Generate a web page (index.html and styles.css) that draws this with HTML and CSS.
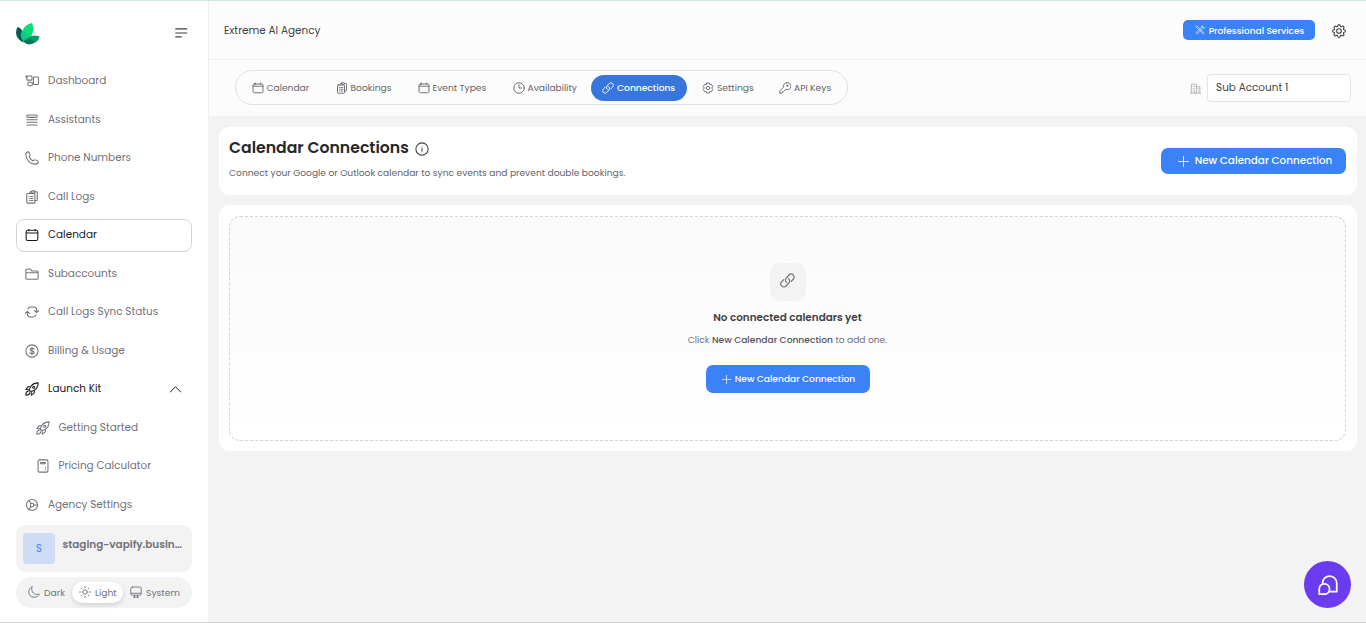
FILE: index.html
```html
<!DOCTYPE html>
<html lang="en">
<head>
<meta charset="utf-8">
<title>Calendar Connections</title>
<link rel="stylesheet" href="styles.css">
</head>
<body>
<svg class="sprite" aria-hidden="true">
  <symbol id="dashboard" viewBox="0 0 24 24"><rect x="3" y="3.500" width="9" height="7" rx="1.500"/><path d="M.8 4h2.200v3M5.500 14H11a1.500 1.500 0 0 1 1.500 1.500v3A1.500 1.500 0 0 1 11 20H6.500A1.500 1.500 0 0 1 5 18.500v-3z"/><rect x="14.500" y="5" width="8.500" height="13" rx="1.500"/></symbol>
  <symbol id="lines" viewBox="0 0 24 24"><rect x="3" y="3.500" width="18" height="4" rx="2"/><path d="M3 11.500h18M3 16h18M3 20.500h18"/></symbol>
  <symbol id="phone" viewBox="0 0 24 24"><path d="M1.500 6.500C1.500 3.500 3.500 1.500 5 1.500c1 0 1.700.5 2.200 1.500l1.500 3.200c.4 1 .1 1.700-.6 2.500L7 10c1.300 3 3.800 5.500 7 7l1.300-1.300c.7-.7 1.500-.9 2.400-.5l3.300 1.300c1 .5 1.500 1 1.500 2 0 2-2 4-5 4C9 22.500 1.500 15 1.500 6.500z"/></symbol>
  <symbol id="logs" viewBox="0 0 24 24"><path d="M8 6V4.500A1.500 1.500 0 0 1 9.500 3H11M17 3h2.500A1.500 1.500 0 0 1 21 4.500v12a1.500 1.500 0 0 1-1.500 1.500H17"/><rect x="11" y="1.500" width="6" height="3.500" rx="1.500"/><rect x="3" y="6" width="14" height="16.500" rx="1.500"/><path d="M7 11h.5M7 14.500h.5M7 18h.5M10 11h3.500M10 14.500h3.500M10 18h3.500"/></symbol>
  <symbol id="cal" viewBox="0 0 24 24"><rect x="2" y="4" width="20" height="17.500" rx="3"/><path d="M2 8.500h20M6.500 2v2.500M17.500 2v2.500"/></symbol>
  <symbol id="folder" viewBox="0 0 24 24"><path d="M1.500 19V5.500a2 2 0 0 1 2-2H9L12 7h8.500a2 2 0 0 1 2 2v10a2 2 0 0 1-2 2h-17a2 2 0 0 1-2-2zM1.500 10h21"/></symbol>
  <symbol id="sync" viewBox="0 0 24 24"><path d="M5 7C6 4.500 7.500 3.500 10 3.500h5c3 0 5 2 5 5V12M16.500 9.500L20 13l3.500-3.500M19 17c-1 2.500-2.500 3.500-5 3.500H9c-3 0-5-2-5-5V12M.5 14.500L4 11l3.500 3.500"/></symbol>
  <symbol id="dollar" viewBox="0 0 24 24"><circle cx="12" cy="12" r="10.500"/><path d="M12 5.500v13M15.500 9c-.5-1.200-1.800-1.700-3.500-1.700-2 0-3.500.8-3.500 2.300 0 3.300 7.200 1.500 7.200 4.900 0 1.500-1.700 2.300-3.700 2.300s-3.300-.8-3.700-2"/></symbol>
  <symbol id="rocket" viewBox="0 0 24 24"><path d="M8 15.500C7 11 11 1.500 22.500 1.500c0 11.500-10.500 15.500-14.500 14zM9.500 8H5.500L1.500 13l5.500.5M16 14.500v4L11 22.500l-.6-5.500"/><circle cx="15" cy="9" r="1.800"/><path d="M5.500 16c-2.500 0-4 1.500-4 6.500 4.500 0 6.500-1.500 6.500-4"/></symbol>
  <symbol id="calc" viewBox="0 0 24 24"><rect x="3.500" y="1.500" width="17" height="21" rx="2.500"/><path d="M8 6h8v2H8zM16 14v1M16 18v.5"/></symbol>
  <symbol id="helm" viewBox="0 0 24 24"><circle cx="12" cy="12" r="9.500"/><circle cx="12" cy="12" r="3"/><path d="M15 12h7M10.500 9.500L6.500 4.500M10.500 14.500l-4 5.500"/></symbol>
  <symbol id="chev" viewBox="0 0 24 24"><path d="M2.500 16.500L12 7l9.500 9.500"/></symbol>
  <symbol id="menu" viewBox="0 0 24 24"><path d="M3 5h19M3 12h19M3 18.500h9.500"/></symbol>
  <symbol id="moon" viewBox="0 0 24 24"><path d="M8 1.500C4 3 1.500 7 1.500 12c0 6 4.500 10.500 10.500 10.500 5 0 9-2.500 10.500-6.500C14 19.500 4.500 12.500 8 1.500z"/></symbol>
  <symbol id="sun" viewBox="0 0 24 24"><circle cx="12" cy="12" r="4.500"/><path d="M12 1v2.500M12 20.500V23M1 12h2.500M20.500 12H23M4.200 4.200L6 6M18 18l1.800 1.800M19.800 4.200L18 6M6 18l-1.800 1.800"/></symbol>
  <symbol id="monitor" viewBox="0 0 24 24"><rect x="1.500" y="2" width="21" height="16.500" rx="3.500"/><path d="M2 14.500h20M7 22.500h10M9 18.500v4M15 18.500v4"/></symbol>
  <symbol id="clock" viewBox="0 0 24 24"><circle cx="12" cy="12" r="10.500"/><path d="M12 5.500V12h5"/></symbol>
  <symbol id="link" viewBox="0 0 24 24"><path d="M10.500 15a5 5 0 0 1-.5-7l4.500-4.800a4.800 4.800 0 0 1 6.800 6.800L18 13.500M13.500 9a5 5 0 0 1 .5 7l-4.500 4.800A4.800 4.800 0 0 1 2.700 14L6 10.500"/></symbol>
  <symbol id="gear" viewBox="0 0 24 24"><path d="M9.500 4.200L10.500 1.500h3l1 2.700 1.500.6 2.700-1.300 2 2L19.500 8.200l.5 1.300 2.700 1v3l-2.700 1-.5 1.300 1.200 2.700-2 2-2.700-1.200-1.500.6-1 2.700h-3l-1-2.700-1.500-.6-2.700 1.200-2-2 1.200-2.700-.5-1.300-2.700-1v-3l2.700-1 .5-1.300-1.200-2.700 2-2L8 4.800z"/><circle cx="12" cy="12" r="4"/></symbol>
  <symbol id="hex" viewBox="0 0 24 24"><path d="M9.500 2h5l1 3 3-.5 3 4.500-2 3 2 3-3 4.500-3-.5-1 3h-5l-1-3-3 .5-3-4.500 2-3-2-3 3-4.500 3 .5z"/><circle cx="12" cy="12" r="3.500"/></symbol>
  <symbol id="key" viewBox="0 0 24 24"><path d="M15.500 1.500a7 7 0 0 0-6.700 9L1.500 18v4.500h4.500l1-3 3-1 3.500-4A7 7 0 1 0 15.500 1.500z"/><circle cx="16.500" cy="7.500" r="1.200"/></symbol>
  <symbol id="tools" viewBox="0 0 24 24"><path d="M3 3l3 .5L19 17l2 4-4-2L4 6zM3 18L15 6c-.5-2 1-4 4-4l-2 3 2 2 3-2c0 3-2 4.500-4 4L6 21z"/></symbol>
  <symbol id="building" viewBox="0 0 24 24"><path d="M3 22V2.500h11V22M14 8h7.500v14M1 22h22M7 17h3v5M7 7v1M10.500 7v1M7 12v1M10.500 12v1M18 12v1M18 17v1"/></symbol>
  <symbol id="plus" viewBox="0 0 24 24"><path d="M12 1v22M1 12h22"/></symbol>
  <symbol id="info" viewBox="0 0 24 24"><circle cx="12" cy="12" r="10.500"/><path d="M12 11v5M12 8v.3"/></symbol>
  <symbol id="chat" viewBox="0 0 24 24"><path d="M5.500 9.500A8.500 8.500 0 1 1 22.500 10v10H13.500"/><path d="M1.500 23v-6.500A6.200 6.200 0 1 1 8 23z"/></symbol>
</svg>

<div class="app">
  <aside class="sidebar">
    <div class="brand">
      <svg class="logo" viewBox="0 0 24 22"><path fill="#075c4b" d="M1.500 4C6 5 8 9 7.500 19.500 0 16-1.500 10 1.500 4z"/><path fill="#0bdc73" d="M16 0c3 7 .5 15-7.500 19C3 10 7 2 16 0z"/><path fill="#10c88a" d="M6 8c5 1 7 6 3 11-5-3-4.500-7-3-11z"/><path fill="#079c69" d="M23.500 13.500c-1 6-8 9.500-15.500 5.500 3.500-6 9-8 15.500-5.500z"/><path fill="#05785b" d="M7.500 18.500c3-3.500 8-3 11 .5-3.500 3.500-8 3-11-.5z"/></svg>
      <svg class="icon menu"><use href="#menu"/></svg>
    </div>
    <nav class="nav">
      <a class="item"><svg class="icon"><use href="#dashboard"/></svg><span>Dashboard</span></a>
      <a class="item"><svg class="icon"><use href="#lines"/></svg><span>Assistants</span></a>
      <a class="item"><svg class="icon"><use href="#phone"/></svg><span>Phone Numbers</span></a>
      <a class="item"><svg class="icon"><use href="#logs"/></svg><span>Call Logs</span></a>
      <a class="item active"><svg class="icon"><use href="#cal"/></svg><span>Calendar</span></a>
      <a class="item"><svg class="icon"><use href="#folder"/></svg><span>Subaccounts</span></a>
      <a class="item"><svg class="icon"><use href="#sync"/></svg><span>Call Logs Sync Status</span></a>
      <a class="item"><svg class="icon"><use href="#dollar"/></svg><span>Billing &amp; Usage</span></a>
      <a class="item open"><svg class="icon"><use href="#rocket"/></svg><span>Launch Kit</span><svg class="icon chevron"><use href="#chev"/></svg></a>
      <a class="item sub"><svg class="icon"><use href="#rocket"/></svg><span>Getting Started</span></a>
      <a class="item sub"><svg class="icon"><use href="#calc"/></svg><span>Pricing Calculator</span></a>
      <a class="item"><svg class="icon"><use href="#helm"/></svg><span>Agency Settings</span></a>
    </nav>
    <div class="account"><div class="avatar">S</div><div class="account-name">staging-vapify.busin…</div></div>
    <div class="themes">
      <div class="theme"><svg class="icon"><use href="#moon"/></svg><span>Dark</span></div>
      <div class="theme selected"><svg class="icon"><use href="#sun"/></svg><span>Light</span></div>
      <div class="theme"><svg class="icon"><use href="#monitor"/></svg><span>System</span></div>
    </div>
  </aside>
  <main class="main">
    <header class="header">
      <div class="agency">Extreme AI Agency</div>
      <button class="btn services"><svg class="icon"><use href="#tools"/></svg><span>Professional Services</span></button>
      <svg class="icon settings"><use href="#gear"/></svg>
    </header>
    <div class="toolbar">
      <div class="tabs">
        <a class="tab t-calendar"><svg class="icon"><use href="#cal"/></svg><span>Calendar</span></a>
        <a class="tab t-bookings"><svg class="icon"><use href="#logs"/></svg><span>Bookings</span></a>
        <a class="tab t-events"><svg class="icon"><use href="#cal"/></svg><span>Event Types</span></a>
        <a class="tab t-avail"><svg class="icon"><use href="#clock"/></svg><span>Availability</span></a>
        <a class="tab t-conn current"><svg class="icon"><use href="#link"/></svg><span>Connections</span></a>
        <a class="tab t-settings"><svg class="icon"><use href="#hex"/></svg><span>Settings</span></a>
        <a class="tab t-keys"><svg class="icon"><use href="#key"/></svg><span>API Keys</span></a>
      </div>
      <div class="picker"><svg class="icon"><use href="#building"/></svg><div class="select">Sub Account 1</div></div>
    </div>
    <section class="content">
      <div class="card intro">
        <div>
          <h1 class="title"><span>Calendar Connections</span><svg class="icon"><use href="#info"/></svg></h1>
          <p class="desc">Connect your Google or Outlook calendar to sync events and prevent double bookings.</p>
        </div>
        <button class="btn new-top"><svg class="icon"><use href="#plus"/></svg><span>New Calendar Connection</span></button>
      </div>
      <div class="card list">
        <div class="empty">
          <div class="tile"><svg class="icon"><use href="#link"/></svg></div>
          <div class="empty-title">No connected calendars yet</div>
          <div class="empty-text">Click <b>New Calendar Connection</b> to add one.</div>
          <button class="btn new-empty"><svg class="icon"><use href="#plus"/></svg><span>New Calendar Connection</span></button>
        </div>
      </div>
    </section>
  </main>
  <div class="chat"><svg class="icon"><use href="#chat"/></svg></div>
</div>
</body>
</html>
```
FILE: styles.css
```css
* { box-sizing: border-box; }
body { margin: 0; font-family: Poppins, Inter, "Open Sans", sans-serif; font-size: 10.45px; color: #71717a; }
.sprite { position: absolute; width: 0; height: 0; }
.icon { width: 14px; height: 14px; flex: none; fill: none; stroke: currentColor; stroke-width: 1.8; stroke-linecap: round; stroke-linejoin: round; }
span { white-space: nowrap; }
.app { display: flex; width: 1366px; height: 623px; overflow: hidden; border-top: 1px solid #d5e5df; border-bottom: 1px solid #d0d0d0; background: #f3f3f3; }

.sidebar { width: 209px; flex: none; padding: 0 16px; background: #fff; border-right: 1px solid #f0f0f0; }
.brand { display: flex; align-items: center; justify-content: space-between; height: 64px; padding-right: 4px; }
.logo { width: 24px; height: 22px; margin-top: 2px; }
.menu { color: #3f3f46; stroke-width: 2; }
.nav { display: flex; flex-direction: column; gap: 5.5px; width: 176px; }
.item { display: flex; align-items: center; height: 33px; padding: 0 7.5px; border: 1px solid transparent; border-radius: 8px; }
.item .icon { width: 14px; height: 14px; margin: 0 9.5px 1px 0; }
.item span { line-height: 16px; padding-bottom: 1px; }
.item.active { color: #18181b; border-color: #d4d4d8; }
.item.open { color: #18181b; }
.item.sub { padding-left: 18.5px; }
.item.sub .icon { margin-right: 9px; }
.item .chevron { margin: 0 1.5px 1px auto; width: 13px; height: 13px; }
.account { display: flex; width: 176px; height: 47px; margin-top: 3px; padding: 8px 7px; border-radius: 9px; background: #f3f3f3; }
.avatar { flex: none; width: 32px; height: 31px; border-radius: 4px; background: #cedcf5; color: #3b82f6; font-size: 10px; line-height: 31px; text-align: center; }
.account-name { margin-left: 7.5px; font-weight: 600; line-height: 23px; white-space: nowrap; }
.themes { display: flex; align-items: center; width: 176px; height: 31px; margin-top: 5px; padding-left: 4px; border-radius: 16px; background: #f3f3f3; font-size: 9.2px; }
.theme { display: flex; align-items: center; gap: 4px; height: 21px; padding: 0 7px; }
.theme span { padding-top: 1px; }
.theme .icon { width: 12px; height: 12px; }
.theme:first-child { width: 52px; padding-left: 8px; }
.theme.selected { width: 51px; border-radius: 11px; background: #fff; box-shadow: 0 2px 5px rgba(0,0,0,.14); }

.main { flex: 1; min-width: 0; }
.header { display: flex; align-items: center; height: 59px; padding: 0 20px 0 15px; background: #fcfcfc; border-bottom: 1px solid #f0f0f0; }
.agency { margin-right: auto; padding-top: 1px; color: #3f3f46; }
.settings { color: #3f3f46; margin: 1px 0 0 17px; }
.btn { display: flex; align-items: center; justify-content: center; padding: 0; border: 0; background: #3b82f6; color: #fff; font: 500 10.4px Poppins, Inter, sans-serif; }
.services { width: 132px; height: 20px; padding-left: 1px; border-radius: 5px; gap: 4px; font-size: 9.05px; }
.services span { padding-top: 1px; }
.services .icon { width: 10px; height: 10px; opacity: .8; }
.toolbar { display: flex; align-items: center; justify-content: space-between; height: 56px; padding: 0 15px 0 26px; background: #fcfcfc; }
.tabs { display: flex; align-items: center; width: 613px; height: 35px; margin-bottom: 1px; border: 1px solid #e0e0e3; border-radius: 18px; font-size: 9.15px; color: #63636b; }
.tab { display: flex; align-items: center; gap: 3px; height: 26px; }
.tab .icon { width: 12px; height: 12px; }
.t-calendar { width: 84px; margin-left: 15.5px; }
.t-bookings { width: 82px; }
.t-events { width: 95px; }
.t-avail { width: 78.5px; }
.t-conn { width: 96px; padding-left: 11px; margin-right: 15px; }
.t-settings { width: 77px; }
.tab.current { border-radius: 13px; background: #3875dd; color: #fff; font-weight: 500; }
.picker { display: flex; align-items: center; gap: 6px; }
.picker .icon { width: 11px; height: 11px; color: #aaa; }
.select { width: 144px; height: 28px; padding-left: 8px; border: 1px solid #e4e4e7; border-radius: 4px; background: #fff; color: #3f3f46; line-height: 25px; }

.content { padding: 11px 9px 0 10px; }
.card { border-radius: 11px; background: #fff; }
.intro { display: flex; justify-content: space-between; height: 68px; padding: 10px 11px 0 10px; }
.title { display: flex; align-items: center; gap: 6px; margin: 0; color: #27272a; font-size: 15.7px; font-weight: 600; line-height: 21px; }
.title .icon { position: relative; top: 1px; width: 14px; height: 14px; color: #3f3f46; }
.desc { margin: 7px 0 0; font-size: 9.13px; line-height: 15px; color: #63636b; white-space: nowrap; }
.new-top { width: 185px; height: 26px; margin-top: 11px; padding-left: 3px; border-radius: 7px; gap: 6px; }
.new-top span { margin-top: -1px; }
.new-top .icon { width: 11px; height: 11px; }
.list { height: 246px; margin-top: 10px; padding: 11px 11px 10px 10px; }
.empty { display: flex; flex-direction: column; align-items: center; height: 225px; padding-top: 46px; border: 1px dashed #d4d4d4; border-radius: 11px; background: linear-gradient(#fafafa, #fff); }
.tile { display: flex; justify-content: center; width: 36px; height: 38px; padding-top: 10px; border-radius: 10px; background: #f3f3f3; }
.tile .icon { width: 15px; height: 15px; }
.empty-title { margin-top: 9px; color: #3f3f46; font-size: 10.4px; font-weight: 600; line-height: 16px; }
.empty-text { margin-top: 7px; font-size: 9.15px; line-height: 14px; }
.empty-text b { font-weight: 500; color: #52525b; }
.new-empty { width: 164px; height: 28px; margin-top: 18px; padding-left: 2px; border-radius: 7px; gap: 4px; font-size: 9.1px; }
.new-empty .icon { width: 9px; height: 9px; }
.chat { position: absolute; left: 1304px; top: 561px; display: flex; align-items: center; justify-content: center; width: 47px; height: 47px; border-radius: 50%; background: #6b3bf0; color: #fff; }
.chat .icon { width: 20px; height: 20px; stroke-width: 2.1; }
```
